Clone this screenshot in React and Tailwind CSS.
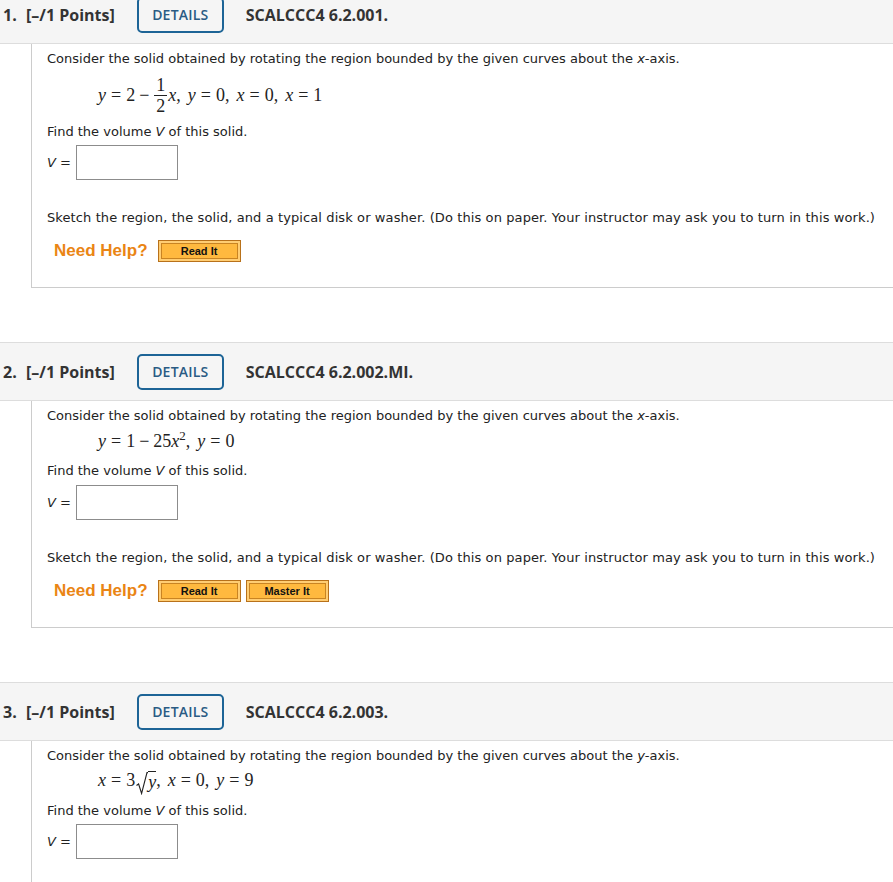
import React from 'react'

const body = { fontFamily: '"DejaVu Sans", Verdana, sans-serif' }
const head = { fontFamily: '"Open Sans", Arial, sans-serif' }
const math = { fontFamily: '"Liberation Serif", "DejaVu Serif", serif' }

function V({ children }) {
  return <i className="font-normal">{children}</i>
}

// relation / binary operator with MathJax-like spacing
function Rel({ children }) {
  return <span className="mx-[5px]">{children}</span>
}
function Bin({ children }) {
  return <span className="mx-[4px]">{children}</span>
}
function Comma() {
  return <span className="mr-[7px]">,</span>
}

function Header({ num, id }) {
  return (
    <div className="h-[59px] flex items-center border-y border-[#dddddd] bg-[#f5f5f5] text-[#333333]" style={head}>
      <span className="ml-[3px] w-[23px] text-[16px] font-bold">{num}.</span>
      <span className="text-[16px] font-bold">[–/1 Points]</span>
      <button className="ml-[22px] w-[87px] h-[36px] rounded-[5px] border-2 border-[#1d6496] text-[14px] font-semibold text-[#2a5b84] tracking-[0.2px]">
        DETAILS
      </button>
      <span className="ml-[22px] text-[16px] font-bold">{id}</span>
    </div>
  )
}

function OrangeBtn({ label }) {
  return (
    <div className="w-[83px] h-[22px] border border-[#b8711a] bg-[#ffcd73] p-[2px]">
      <div className="h-full border border-[#c98422] bg-[#ffb93f] flex items-center justify-center text-[11px] font-bold text-[#111111]" style={{ fontFamily: '"Liberation Sans", Arial, sans-serif' }}>
        {label}
      </div>
    </div>
  )
}

function Answer() {
  return (
    <div className="flex items-center">
      <span className="text-[13px]"><V>V</V> =</span>
      <div className="ml-[5px] w-[102px] h-[35px] border border-[#8c8c8c] bg-white" />
    </div>
  )
}

function Help({ master }) {
  return (
    <div className="flex items-center h-[22px] pl-[7px]">
      <span className="text-[17px] font-bold text-[#ea8514]" style={{ fontFamily: '"Liberation Sans", Arial, sans-serif' }}>Need Help?</span>
      <div className="ml-[10px] flex gap-[5px]">
        <OrangeBtn label="Read It" />
        {master && <OrangeBtn label="Master It" />}
      </div>
    </div>
  )
}

function Frac({ n, d }) {
  return (
    <span className="inline-flex flex-col items-center mx-[1px] leading-[18px]">
      <span>{n}</span>
      <span className="w-[13px] border-t border-[#222222] my-[1px]" />
      <span>{d}</span>
    </span>
  )
}

function Sqrt({ children }) {
  return (
    <span className="inline-flex items-end ml-[1px]">
      <svg width="12" height="23" viewBox="0 0 12 23" className="mb-[-4px]">
        <path d="M0.5 13.5 L2.6 12 L5.6 21.5 L11 0.6 L12 0.6" fill="none" stroke="#222" strokeWidth="1.1" />
      </svg>
      <span className="border-t border-[#222222] pt-[1px] leading-[18px] mt-[1px]">{children}</span>
    </span>
  )
}

function Panel({ axis, mathLine, mathClass, boxGap, sketch, master }) {
  return (
    <div className="ml-[31px] border-l border-b border-[#cccccc] pl-[15px] pt-[7px] text-[#222222]" style={body}>
      <p className="text-[13px] leading-4">
        Consider the solid obtained by rotating the region bounded by the given curves about the <V>{axis}</V>-axis.
      </p>
      <div className={`${mathClass} pl-[51px] flex items-center text-[18px] text-[#222222]`} style={math}>
        {mathLine}
      </div>
      <p className="text-[13px] leading-4">Find the volume <V>V</V> of this solid.</p>
      <div className={boxGap}>
        <Answer />
      </div>
      {sketch ? (
        <>
          <p className="mt-[30px] text-[13px] leading-4 tracking-[0.1px] whitespace-nowrap">
            Sketch the region, the solid, and a typical disk or washer. (Do this on paper. Your instructor may ask you to turn in this work.)
          </p>
          <div className="mt-[14px] pb-[25px]">
            <Help master={master} />
          </div>
        </>
      ) : (
        <div className="h-[30px]" />
      )}
    </div>
  )
}

export default function App() {
  return (
    <div className="bg-white min-h-screen overflow-hidden">
      <div className="-mt-[15px]">
        <Header num={1} id="SCALCCC4 6.2.001." />
        <Panel
          axis="x"
          mathClass="mt-[6px] h-[44px] mb-[7px]"
          boxGap="mt-[5px]"
          sketch
          mathLine={
            <span className="flex items-center whitespace-nowrap">
              <V>y</V><Rel>=</Rel>2<Bin>−</Bin><Frac n="1" d="2" /><V>x</V><Comma /><V>y</V><Rel>=</Rel>0<Comma /><V>x</V><Rel>=</Rel>0<Comma /><V>x</V><Rel>=</Rel>1
            </span>
          }
        />
        <div className="h-[54px]" />
        <Header num={2} id="SCALCCC4 6.2.002.MI." />
        <Panel
          axis="x"
          mathClass="mt-[7px] h-[20px] mb-[12px]"
          boxGap="mt-[6px]"
          sketch
          master
          mathLine={
            <span className="whitespace-nowrap">
              <V>y</V><Rel>=</Rel>1<Bin>−</Bin>25<V>x</V><sup className="text-[13px]">2</sup><Comma /><V>y</V><Rel>=</Rel>0
            </span>
          }
        />
        <div className="h-[54px]" />
        <Header num={3} id="SCALCCC4 6.2.003." />
        <Panel
          axis="y"
          mathClass="mt-[4px] h-[24px] mb-[11px]"
          boxGap="mt-[5px]"
          mathLine={
            <span className="flex items-center whitespace-nowrap">
              <V>x</V><Rel>=</Rel>3<Sqrt><V>y</V></Sqrt><Comma /><V>x</V><Rel>=</Rel>0<Comma /><V>y</V><Rel>=</Rel>9
            </span>
          }
        />
      </div>
    </div>
  )
}
